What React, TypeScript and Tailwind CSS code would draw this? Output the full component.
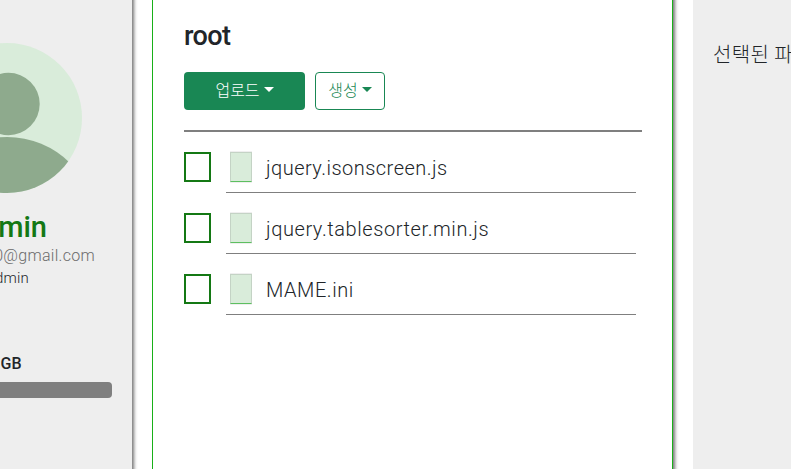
const files = [
  { name: "jquery.isonscreen.js", tracking: "tracking-[0.47px]" },
  { name: "jquery.tablesorter.min.js", tracking: "tracking-[0.58px]" },
  { name: "MAME.ini", tracking: "tracking-[0.55px]" },
];

function Avatar() {
  return (
    <svg className="h-[150px] w-[150px] shrink-0" viewBox="0 0 150 150">
      <defs>
        <clipPath id="avatar">
          <circle cx="75" cy="75" r="75" />
        </clipPath>
      </defs>
      <circle cx="75" cy="75" r="75" fill="#d9ecda" />
      <circle cx="76.5" cy="61" r="31.2" fill="#8eaa8d" />
      <circle cx="75" cy="183.5" r="89.5" fill="#8eaa8d" clipPath="url(#avatar)" />
    </svg>
  );
}

function Caret() {
  return (
    <svg className="mb-[3px] h-[5px] w-[10px]" viewBox="0 0 10 5">
      <path d="M0 0H10L5 5Z" fill="currentColor" />
    </svg>
  );
}

function FileIcon() {
  return (
    <div className="h-[32px] w-[22px] border-y border-[#efefef]">
      <div className="h-[30px] border border-[#c4d3c5] border-b-[#5dbf60] bg-[#d9ecda]" />
    </div>
  );
}

function EdgeShadow() {
  return (
    <div className="flex w-[6px] shrink-0">
      <div className="w-px bg-[#8f8f8f]" />
      <div className="w-px bg-[#a9a9a9]" />
      <div className="w-px bg-[#cacaca]" />
      <div className="w-px bg-[#e4e4e4]" />
      <div className="w-px bg-[#f5f5f5]" />
      <div className="w-px bg-[#fcfcfc]" />
    </div>
  );
}

export default function App() {
  return (
    <div className="flex h-[469px] w-[791px] overflow-hidden bg-white font-['Roboto','Noto_Sans_CJK_KR',sans-serif] text-[#212529]">
      <aside className="flex w-[132px] shrink-0 flex-col items-end overflow-hidden whitespace-nowrap bg-[#eee] pt-[43px]">
        <div className="pr-[50px]">
          <Avatar />
        </div>
        <div className="mt-[15px] pr-[85px] text-[29px] leading-[38px] font-medium text-[#147814]">admin</div>
        <div className="-mt-px pr-[37px] text-[16px] leading-[22px] font-light tracking-[0.3px] text-[#6c6c6c]">0@gmail.com</div>
        <div className="pr-[103px] text-[15px] leading-[22px] font-light tracking-[0.2px]">admin</div>
        <div className="mt-[63px] pr-[110px] text-[16px] leading-[24px] font-medium tracking-[0.3px]">GB</div>
        <div className="mt-[6px] mr-[20px] h-4 w-[112px] rounded-r-[4px] bg-[#7f7f7f]" />
      </aside>
      <EdgeShadow />

      <main className="ml-[14px] w-[521px] shrink-0 border-x border-[#18b018] bg-white pr-[30px] pl-[31px]">
        <h1 className="mt-[18px] text-[27px] leading-[36px] font-medium tracking-[-0.6px]">root</h1>
        <div className="mt-[18px] flex gap-[10px] text-[16px] font-light">
          <button className="flex h-[38px] w-[121px] items-center justify-center gap-1 rounded-[4px] bg-[#198754] text-white">
            업로드 <Caret />
          </button>
          <button className="flex h-[38px] w-[70px] items-center justify-center gap-1 rounded-[4px] border border-[#198754] text-[#198754]">
            생성 <Caret />
          </button>
        </div>
        <hr className="mt-5 mb-[10px] w-[458px] border-t-2 border-[#7f7f7f]" />
        {files.map(({ name, tracking }) => (
          <div key={name} className="flex h-[61px]">
            <div className="mt-[10px] h-[30px] w-[27px] border-2 border-[#147814]" />
            <div className="ml-[15px] flex h-[51px] w-[410px] border-b border-[#7f7f7f] pt-[9px] pl-1">
              <FileIcon />
              <span className={"ml-[14px] text-[20px] leading-[35px] font-light " + tracking}>{name}</span>
            </div>
          </div>
        ))}
      </main>
      <EdgeShadow />

      <section className="ml-[14px] flex-1 overflow-hidden whitespace-nowrap bg-[#eee] pt-[40px] pl-5 text-[20px] leading-[30px] font-light tracking-[0.3px]">
        선택된 파일
      </section>
    </div>
  );
}
